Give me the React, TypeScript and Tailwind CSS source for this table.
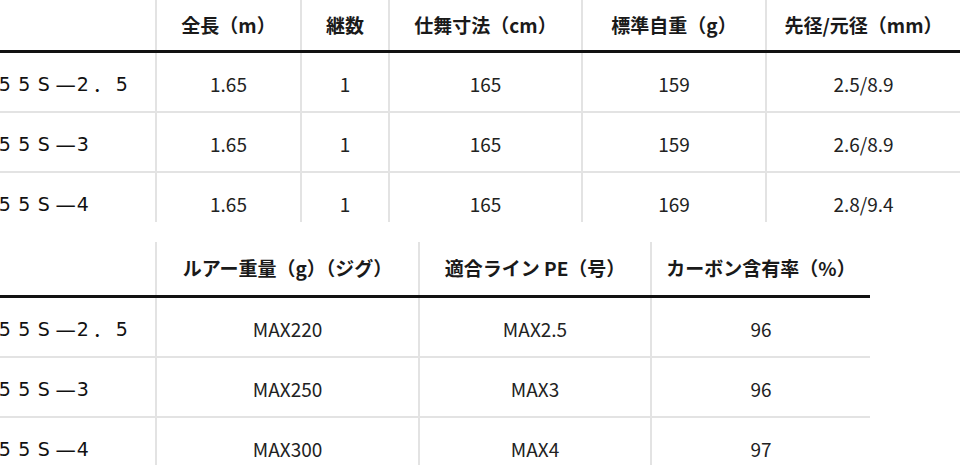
const font = { fontFamily: '"Noto Sans CJK JP", "Noto Sans", sans-serif' };

type Spec = {
  cols: string;
  width: string;
  headers: string[];
  rows: string[][];
};

const specTop: Spec = {
  cols: "grid-cols-[155px_145px_88px_193px_184px_195px]",
  width: "w-[960px]",
  headers: ["", "全長（m）", "継数", "仕舞寸法（cm）", "標準自重（g）", "先径/元径（mm）"],
  rows: [
    ["55S－2．5", "1.65", "1", "165", "159", "2.5/8.9"],
    ["55S－3", "1.65", "1", "165", "159", "2.6/8.9"],
    ["55S－4", "1.65", "1", "165", "169", "2.8/9.4"],
  ],
};

const specBottom: Spec = {
  cols: "grid-cols-[155px_263px_232px_220px]",
  width: "w-[870px]",
  headers: ["", "ルアー重量（g）（ジグ）", "適合ライン PE（号）", "カーボン含有率（%）"],
  rows: [
    ["55S－2．5", "MAX220", "MAX2.5", "96"],
    ["55S－3", "MAX250", "MAX3", "96"],
    ["55S－4", "MAX300", "MAX4", "97"],
  ],
};

// model names are set in even-pitch cells, like a fixed-width font
function ModelName({ name }: { name: string }) {
  return (
    <div className="flex -ml-[5px] pt-[20px] leading-[22px] text-[#111]">
      {Array.from(name).map((ch, i) =>
        ch === "－" ? (
          <span key={i} className="w-[19.5px] shrink-0 flex justify-center text-[22px] leading-[22px] translate-x-[2px] scale-x-[1.15]">
            {ch}
          </span>
        ) : ch === "．" ? (
          <span key={i} className="w-[19.5px] shrink-0 text-center text-[19px]">
            {ch}
          </span>
        ) : (
          <span key={i} className="w-[19.5px] shrink-0 text-center text-[19px] font-['DejaVu_Sans',sans-serif]">
            {ch}
          </span>
        )
      )}
    </div>
  );
}

function SpecTable({ spec, headH, rowHs }: { spec: Spec; headH: string; rowHs: string[] }) {
  return (
    <div className={spec.width}>
      <div className={`grid ${spec.cols} ${headH} border-b-[3px] border-[#111]`}>
        {spec.headers.map((h, i) => (
          <div
            key={i}
            className={`flex items-center justify-center text-[19px] font-bold text-[#1a1a1a] ${i > 0 ? "border-l-2 border-[#e3e3e3]" : ""}`}
          >
            {h}
          </div>
        ))}
      </div>
      {spec.rows.map((row, r) => (
        <div
          key={r}
          className={`grid ${spec.cols} ${rowHs[r]} ${r < spec.rows.length - 1 ? "border-b-2 border-[#e3e3e3]" : ""}`}
        >
          {row.map((c, i) =>
            i === 0 ? (
              <ModelName key={i} name={c} />
            ) : (
              <div
                key={i}
                className="pt-[20px] text-center text-[19px] text-[#222] leading-[22px] border-l-2 border-[#e3e3e3]"
              >
                {c}
              </div>
            )
          )}
        </div>
      ))}
    </div>
  );
}

export default function App() {
  return (
    <div className="w-[960px] h-[465px] overflow-hidden bg-white" style={font}>
      <SpecTable spec={specTop} headH="h-[53px]" rowHs={["h-[60px]", "h-[60px]", "h-[49px]"]} />
      <div className="h-[20px]" />
      <SpecTable spec={specBottom} headH="h-[56px]" rowHs={["h-[60px]", "h-[60px]", "h-[60px]"]} />
    </div>
  );
}
